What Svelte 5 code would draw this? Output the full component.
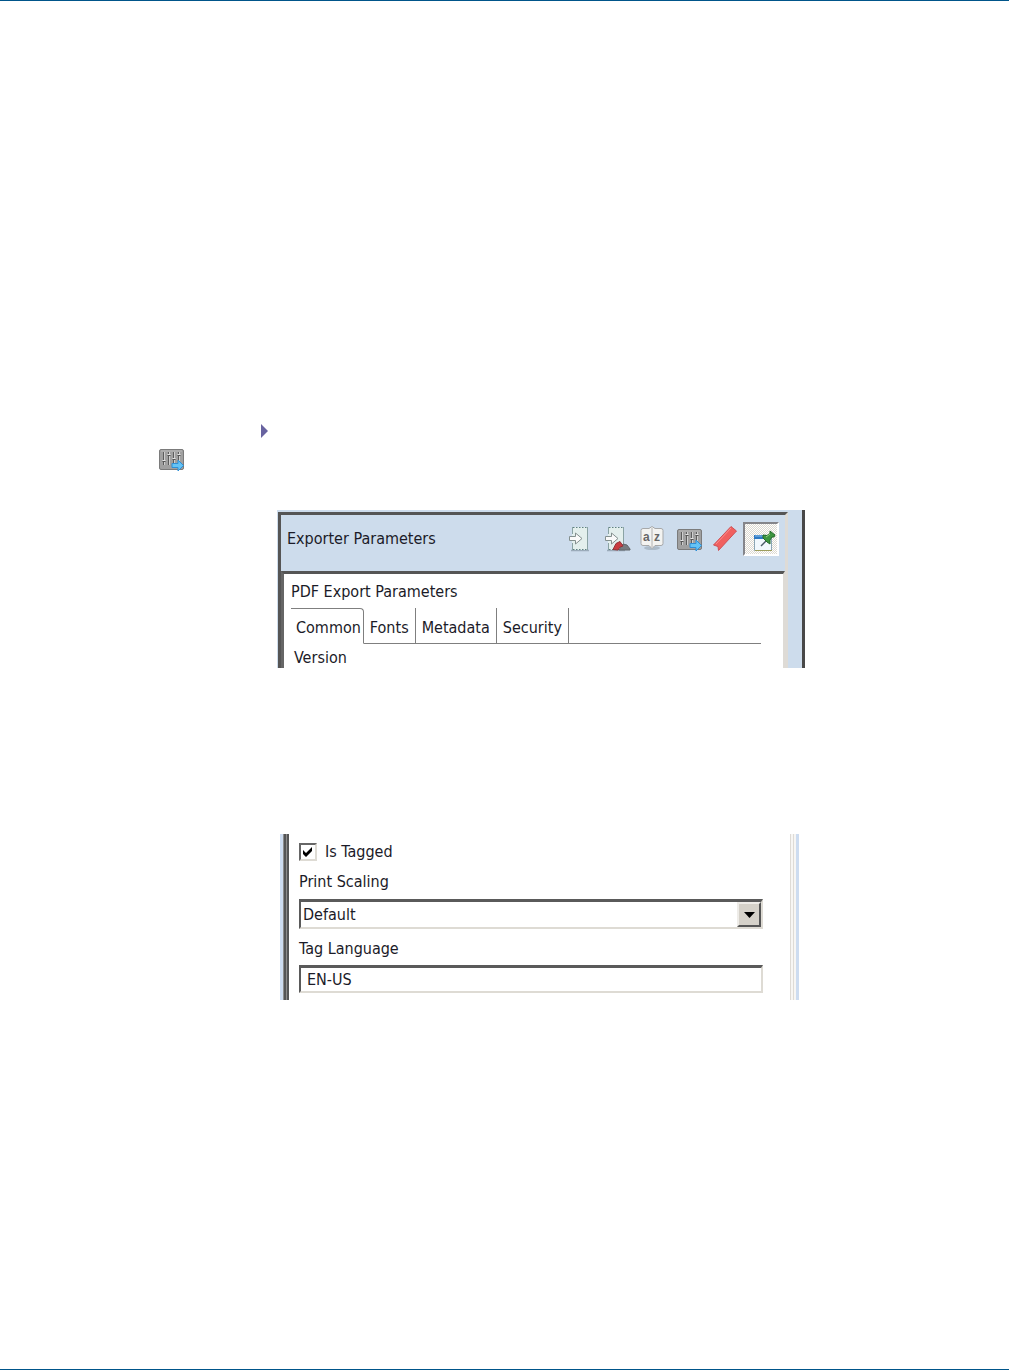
<script>
  const tabs = ['Common', 'Fonts', 'Metadata', 'Security'];

  let activeTab = $state('Common');
  let pinned = $state(true);
  let tagged = $state(true);
  let scaling = $state('Default');
  let language = $state('EN-US');
</script>

{#snippet sheet()}
  <path d="M6 27.5h18" stroke="#8797a6" stroke-width="1.5" opacity=".7"/>
  <path d="M7 4h16v23H7z" fill="#e3efed"/>
  <path d="M7.5 4v7M7.5 20v7M22.5 4v23" stroke="#8aa3a4" fill="none"/>
  <path d="M8 4.500h15M8 26.500h15" stroke="#5f8184" stroke-dasharray="1.5 1.5"/>
  <path d="M4.500 13.500h6V10l6.500 5.500-6.500 5.500v-3.500h-6z" fill="#fafafa" stroke="#84908f"/>
{/snippet}

{#snippet mixer()}
  <rect x="4.500" y="6.500" width="24" height="20" rx="1.500" fill="#a0a0a0" stroke="#7b7b7b"/>
  <path d="M6 8h21" stroke="#b9b9b9"/>
  <path d="M8.500 9v13M13.500 9v13M18.500 9v13M23.500 9v13" stroke="#5c5c5c"/>
  <path d="M9.500 9v13M14.500 9v13M19.500 9v13M24.500 9v13" stroke="#cfcfcf"/>
  <path d="M7.500 18.500h3M12.500 12.500h3M17.500 16.500h3M22.500 12.500h3" stroke="#555"/>
  <path d="M7.500 17.500h3M12.500 11.500h3M17.500 15.500h3M22.500 11.500h3" stroke="#e4e4e4"/>
  <path d="M17 20.500h6V17l5.500 5.500-5.500 5.500v-3.500h-6z" fill="#65c3f5" stroke="#2f8fd6"/>
{/snippet}

<main class="page">
  <div class="path-row">
    <svg width="7" height="14" viewBox="0 0 7 14" aria-hidden="true">
      <path d="M0 0l7 7-7 7z" fill="#6863a0"/>
    </svg>
  </div>
  <div class="icon-row">
    <svg width="26" height="22" viewBox="4 6 26 22" aria-hidden="true">{@render mixer()}</svg>
  </div>

  <section class="exporter">
    <div class="exporter-view">
      <header class="toolbar">
        <span class="title">Exporter Parameters</span>
        <button class="tool" aria-label="Export">
          <svg viewBox="0 0 32 32">{@render sheet()}</svg>
        </button>
        <button class="tool" aria-label="Export selection">
          <svg viewBox="0 0 32 32">
            {@render sheet()}
            <path d="M18 27l4-6 4 1 3 4v1z" fill="#777c80" stroke="#62666a"/>
            <path d="M12 26.500l3-6 4-2 3 4.500-3 1-2 3z" fill="#c93c40" stroke="#933237"/>
          </svg>
        </button>
        <button class="tool" aria-label="Sort alphabetically">
          <svg viewBox="0 0 32 32">
            <ellipse cx="15" cy="25" rx="8" ry="2" fill="#9dabb9" opacity=".7"/>
            <path d="M6 5.500h6l3-2 3 2h6q2 0 2 2v13q0 2-2 2h-6l-3 3-3-3H6q-2 0-2-2v-13q0-2 2-2z" fill="#f3f3f1" stroke="#a7a8a9"/>
            <path d="M15 5v19" stroke="#b2b2b2"/>
            <text x="6" y="18" class="glyph">a</text>
            <text x="17" y="18" class="glyph">z</text>
          </svg>
        </button>
        <button class="tool" aria-label="Exporter settings">
          <svg viewBox="0 0 32 32">{@render mixer()}</svg>
        </button>
        <button class="tool" aria-label="Bookmark">
          <svg viewBox="0 0 32 32">
            <path d="M22 3.500l5.500 4.500L9.500 27.500 9 23.500 4.500 22z" fill="#f0605f" stroke="#d05055"/>
            <path d="M22 5L7 21" stroke="#fb8c8d"/>
          </svg>
        </button>
        <button class="tool" class:pinned aria-label="Pin" aria-pressed={pinned} onclick={() => (pinned = !pinned)}>
          <svg viewBox="0 0 32 32">
            <path d="M9.500 12.500h17v15h-17z" fill="#f1f8fd" stroke="#8ba6b5"/>
            <path d="M9 12h14v4H9z" fill="#2f79c3"/>
            <path d="M10 13h10" stroke="#8cc1ec"/>
            <path d="M10 27.500h17" stroke="#9d9d5c"/>
            <path d="M16 23l6-6" stroke="#4b5b68" stroke-width="1.500"/>
            <path d="M18 12l4 .5 3-2V8l5 4-1 2h-2l-2 3v4l-3-2-4-4z" fill="#3d963f" stroke="#246a2a"/>
            <path d="M21 14l4-3" stroke="#9ad284"/>
          </svg>
        </button>
      </header>

      <div class="sheet">
        <h1>PDF Export Parameters</h1>
        <div class="tabs" role="tablist">
          {#each tabs as tab}
            <button
              class="tab"
              class:active={tab === activeTab}
              role="tab"
              aria-selected={tab === activeTab}
              onclick={() => (activeTab = tab)}
            >{tab}</button>
          {/each}
          <span class="tab-rest"></span>
        </div>
        <p class="version">Version</p>
      </div>
    </div>
  </section>

  <section class="options">
    <form class="options-view">
      <label class="check">
        <span class="box">
          <input type="checkbox" bind:checked={tagged} />
          {#if tagged}
            <svg width="12" height="12" viewBox="0 0 12 12" aria-hidden="true">
              <path d="M1 4l3 3 6-6v4l-6 6-3-3z" fill="#000"/>
            </svg>
          {/if}
        </span>
        Is Tagged
      </label>

      <label class="label" for="scaling">Print Scaling</label>
      <div class="select">
        <select id="scaling" bind:value={scaling}>
          <option>Default</option>
          <option>None</option>
        </select>
        <span class="drop">
          <svg width="11" height="6" viewBox="0 0 11 6" aria-hidden="true">
            <path d="M0 0h11L5.500 6z" fill="#000"/>
          </svg>
        </span>
      </div>

      <label class="label" for="language">Tag Language</label>
      <input id="language" class="text" type="text" bind:value={language} />
    </form>
  </section>
</main>

<style>
  :global(body) {
    margin: 0;
    background: #fff;
  }

  .page {
    box-sizing: border-box;
    min-height: 100vh;
    padding: 423px 204px 0 159px;
    border-top: 1px solid #00558a;
    border-bottom: 1px solid #00558a;
    color: #1b1b28;
    font: 16px/20px "DejaVu Sans Condensed", "Noto Sans", sans-serif;
  }

  .page svg {
    display: block;
  }

  button, select, input {
    box-sizing: border-box;
    margin: 0;
    color: inherit;
    font: inherit;
  }

  .path-row {
    padding-left: 102px;
  }

  .icon-row {
    padding-top: 11px;
  }

  .exporter {
    margin: 39px 0 0 118px;
    padding: 2px 14px 0 1px;
    border-right: 3px solid #484848;
    background: #cddcec;
  }

  .exporter-view {
    border-top: 3px solid #555;
    border-left: 3px solid #555;
    border-right: 3px solid #dedbd6;
  }

  .toolbar {
    display: flex;
    align-items: center;
    height: 56px;
    padding: 0 6px 8px;
    box-sizing: border-box;
  }

  .title {
    flex: 1;
    white-space: nowrap;
  }

  .tool {
    display: flex;
    justify-content: center;
    align-items: center;
    width: 36px;
    height: 34px;
    padding: 0;
    border: 0;
    background: none;
  }

  .tool svg {
    flex: none;
    width: 32px;
    height: 32px;
  }

  .pinned {
    border: 2px solid;
    border-color: #85858a #fff #fff #85858a;
    background: repeating-conic-gradient(#fff 0 25%, #ddd9d0 0 50%) 0 0 / 2px 2px;
  }

  .glyph {
    fill: #666;
    font: bold 12px "Liberation Sans", sans-serif;
  }

  .sheet {
    padding: 8px 22px 0 7px;
    border-top: 3px solid #555;
    border-left: 3px solid #666;
    border-right: 2px solid #dedbd6;
    background: #fff;
  }

  h1 {
    margin: 0;
    font: inherit;
  }

  .tabs {
    display: flex;
    margin-top: 6px;
  }

  .tab {
    height: 36px;
    padding: 4px 6px 0;
    border: 0;
    border-right: 1px solid #7f7f7f;
    border-bottom: 1px solid #7f7f7f;
    background: none;
  }

  .tab.active {
    padding: 3px 2px 0 5px;
    border-top: 1px solid #7f7f7f;
    border-bottom-color: transparent;
    border-top-right-radius: 4px;
  }

  .tab-rest {
    flex: 1;
    border-bottom: 1px solid #7f7f7f;
  }

  .version {
    margin: 4px 0 0 3px;
  }

  .options {
    margin: 166px 6px 0 121px;
    border-left: 3px solid #cddcf0;
    border-right: 3px solid #cddcf0;
  }

  /* bevelled frames of the two nested scroll areas, seen side on */
  .options-view {
    display: flex;
    flex-direction: column;
    padding: 8px 33px 7px 16px;
    background:
      linear-gradient(to right, #8d8d8d 1px, #555 1px 3px, #8d8d8d 3px 4px, #555 4px) left / 6px 100% no-repeat,
      linear-gradient(to right, #dedbd6 1px, #f7f6f4 1px 3px, #dedbd6 3px 4px, #f7f6f4 4px) right / 6px 100% no-repeat;
  }

  .check {
    display: flex;
    align-items: center;
    gap: 8px;
  }

  .box {
    display: grid;
    place-items: center;
  }

  .box input, .box svg {
    grid-area: 1 / 1;
  }

  .box svg {
    pointer-events: none;
  }

  .box input {
    width: 18px;
    height: 18px;
    border: 2px solid;
    border-color: #666 #dedbd4 #dedbd4 #666;
    background: #fff;
    appearance: none;
  }

  .label {
    margin-top: 10px;
  }

  .select {
    position: relative;
    height: 30px;
    margin-top: 7px;
  }

  select, .text {
    width: 100%;
    border: 3px solid;
    border-color: #5a5a5a #dedbd4 #dedbd4 #5a5a5a;
    border-width: 3px 2px 2px 2px;
    border-radius: 0;
    background: #fff;
    appearance: none;
  }

  select {
    height: 30px;
    padding: 0 28px 0 2px;
  }

  .drop {
    position: absolute;
    top: 3px;
    right: 2px;
    bottom: 2px;
    display: grid;
    place-items: center;
    width: 24px;
    box-sizing: border-box;
    border: 2px solid;
    border-color: #eeece8 #555 #555 #eeece8;
    background: #d5d1c9;
    pointer-events: none;
  }

  .text {
    height: 28px;
    margin-top: 6px;
    padding: 0 6px;
  }
</style>
